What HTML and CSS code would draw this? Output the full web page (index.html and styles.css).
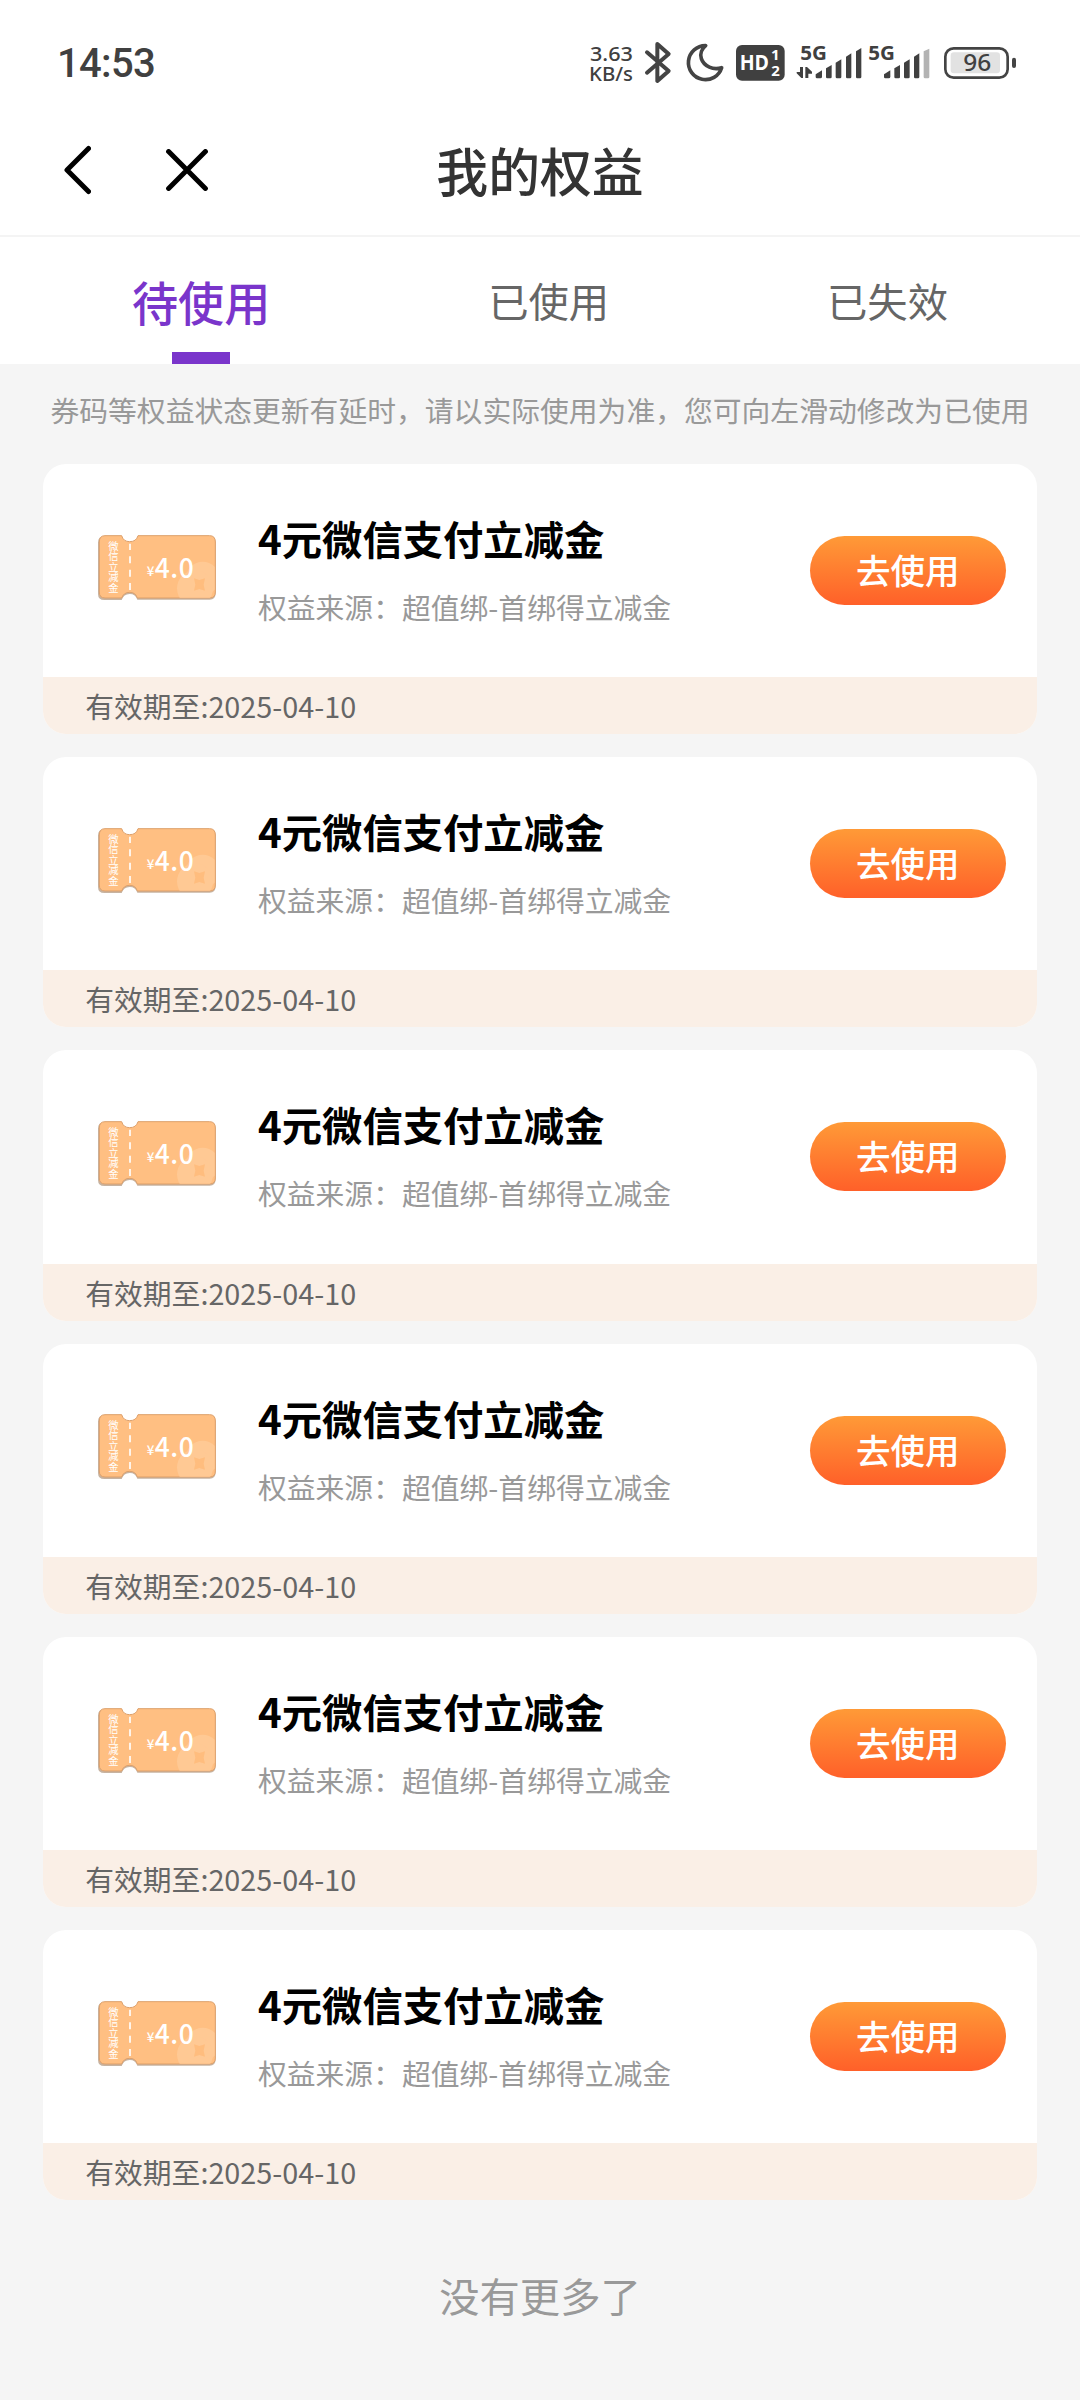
FILE: index.html
```
<!DOCTYPE html>
<html lang="zh-CN">
<head>
<meta charset="utf-8">
<title>我的权益</title>
<link rel="stylesheet" href="styles.css">
</head>
<body>
<svg class="defs" aria-hidden="true">
  <defs>
    <clipPath id="ticket-edge"><rect x="200" y="15" width="159" height="185" rx="16"/></clipPath>
    <symbol id="ticket" viewBox="0 0 375 220">
      <path d="M28 16H80Q84 37 104 37Q124 37 131 16H344Q362 16 362 35V187Q362 206 344 206H127Q122 189 104 189Q86 189 80 207H28Q9 207 9 189V35Q9 16 28 16Z" fill="#b9a08a" opacity=".8"/>
      <path d="M30 14H80Q85 32 104 32Q124 32 129 14H344Q361 14 361 33V183Q361 201 344 201H127Q122 184 104 184Q86 184 80 201H30Q13 201 13 183V33Q13 14 30 14Z" fill="#ffbf82" stroke="#dda06a" stroke-width="3"/>
      <g clip-path="url(#ticket-edge)" fill="#ffc994"><circle cx="323" cy="142" r="50"/><circle cx="300" cy="172" r="54"/></g>
      <path d="M297 142L313 147L330 142L326 161L330 179L313 174L297 179L301 161Z" fill="#ffbd7e"/>
      <path d="M105 38V184" stroke="#fff" stroke-width="5" stroke-dasharray="21 19" stroke-dashoffset="2"/>
    </symbol>
  </defs>
</svg>
<div class="status">
  <time class="clock">14:53</time>
  <svg class="indicators" viewBox="0 0 1440 270">
    <g class="speed">
      <text x="60" y="124" textLength="129" lengthAdjust="spacingAndGlyphs">3.63</text>
      <text x="57" y="184" textLength="132" lengthAdjust="spacingAndGlyphs">KB/s</text>
    </g>
    <path d="M231 97L296 153L262 183V72L296 102L231 158" fill="none" stroke="#444" stroke-width="12" stroke-linecap="round" stroke-linejoin="round"/>
    <path d="M407 77A51 51 0 1 0 455 143C430 151 402 140 394 116C389 101 396 86 407 77Z" fill="none" stroke="#444" stroke-width="11" stroke-linejoin="round"/>
    <rect x="498" y="75" width="146" height="107" rx="18" fill="#404040"/>
    <text class="hd" x="509" y="151" textLength="88" lengthAdjust="spacingAndGlyphs">HD</text>
    <text class="hd-sim" x="603" y="121">1</text>
    <text class="hd-sim" x="604" y="168">2</text>
    <text class="net" x="691" y="120" textLength="80" lengthAdjust="spacingAndGlyphs">5G</text>
    <text class="net" x="895" y="120" textLength="80" lengthAdjust="spacingAndGlyphs">5G</text>
    <g fill="#404040">
      <path d="M690 141H699V174H694L680 160V156H690ZM706 141H711L726 155V161H715V174H706Z"/>
      <path d="M737 163L756 151V170Q756 175 751 175H741Q737 175 737 171Z"/>
      <path d="M768 145L785 135V171Q785 175 781 175H772Q768 175 768 171Z"/>
      <path d="M797 128L814 118V171Q814 175 810 175H801Q797 175 797 171Z"/>
      <path d="M828 110L844 100V171Q844 175 840 175H832Q828 175 828 171Z"/>
      <path d="M858 94L874 84V171Q874 175 870 175H862Q858 175 858 171Z"/>
      <path d="M942 163L961 151V170Q961 175 956 175H946Q942 175 942 171Z"/>
      <path d="M973 145L990 135V171Q990 175 986 175H977Q973 175 973 171Z"/>
      <path d="M1002 128L1019 118V171Q1019 175 1015 175H1006Q1002 175 1002 171Z"/>
      <path d="M1032 110L1048 100V171Q1048 175 1044 175H1036Q1032 175 1032 171Z"/>
    </g>
    <path d="M1061 94L1078 86V171Q1078 175 1074 175H1065Q1061 175 1061 171Z" fill="#b3b3b3"/>
    <rect x="1126" y="85" width="187" height="88" rx="25" fill="none" stroke="#444" stroke-width="8"/>
    <rect x="1142" y="97" width="148" height="63" rx="10" fill="#e2e2e2"/>
    <rect x="1326" y="113" width="12" height="31" rx="6" fill="#444"/>
    <text class="battery" x="1180" y="153" textLength="84" lengthAdjust="spacingAndGlyphs">96</text>
  </svg>
</div>
<header class="nav">
  <svg class="nav-icon" viewBox="0 0 28 50"><path d="M25.5 3.5L4 25L25.5 46.5"/></svg>
  <svg class="nav-icon" viewBox="0 0 42 42"><path d="M2.6 2.6L39.4 39.4M39.4 2.6L2.6 39.4"/></svg>
  <h1 class="nav-title">我的权益</h1>
</header>
<nav class="tabs">
  <div class="tab tab-active">待使用</div>
  <div class="tab">已使用</div>
  <div class="tab">已失效</div>
</nav>
<p class="notice">券码等权益状态更新有延时，请以实际使用为准，您可向左滑动修改为已使用</p>
<main class="list">
  <article class="card">
    <div class="card-body">
      <svg class="coupon" viewBox="0 0 375 220"><use href="#ticket"/><text class="stub"><tspan x="40" y="56">微</tspan><tspan x="40" y="87">信</tspan><tspan x="40" y="119">立</tspan><tspan x="40" y="151">减</tspan><tspan x="40" y="182">金</tspan></text><text class="yen" x="155" y="136">¥</text><text class="amount" x="179" y="140">4.0</text></svg>
      <div class="info"><h2 class="name">4元微信支付立减金</h2><p class="source">权益来源：超值绑-首绑得立减金</p></div>
      <button class="use">去使用</button>
    </div>
    <div class="expiry">有效期至:2025-04-10</div>
  </article>
  <article class="card">
    <div class="card-body">
      <svg class="coupon" viewBox="0 0 375 220"><use href="#ticket"/><text class="stub"><tspan x="40" y="56">微</tspan><tspan x="40" y="87">信</tspan><tspan x="40" y="119">立</tspan><tspan x="40" y="151">减</tspan><tspan x="40" y="182">金</tspan></text><text class="yen" x="155" y="136">¥</text><text class="amount" x="179" y="140">4.0</text></svg>
      <div class="info"><h2 class="name">4元微信支付立减金</h2><p class="source">权益来源：超值绑-首绑得立减金</p></div>
      <button class="use">去使用</button>
    </div>
    <div class="expiry">有效期至:2025-04-10</div>
  </article>
  <article class="card">
    <div class="card-body">
      <svg class="coupon" viewBox="0 0 375 220"><use href="#ticket"/><text class="stub"><tspan x="40" y="56">微</tspan><tspan x="40" y="87">信</tspan><tspan x="40" y="119">立</tspan><tspan x="40" y="151">减</tspan><tspan x="40" y="182">金</tspan></text><text class="yen" x="155" y="136">¥</text><text class="amount" x="179" y="140">4.0</text></svg>
      <div class="info"><h2 class="name">4元微信支付立减金</h2><p class="source">权益来源：超值绑-首绑得立减金</p></div>
      <button class="use">去使用</button>
    </div>
    <div class="expiry">有效期至:2025-04-10</div>
  </article>
  <article class="card">
    <div class="card-body">
      <svg class="coupon" viewBox="0 0 375 220"><use href="#ticket"/><text class="stub"><tspan x="40" y="56">微</tspan><tspan x="40" y="87">信</tspan><tspan x="40" y="119">立</tspan><tspan x="40" y="151">减</tspan><tspan x="40" y="182">金</tspan></text><text class="yen" x="155" y="136">¥</text><text class="amount" x="179" y="140">4.0</text></svg>
      <div class="info"><h2 class="name">4元微信支付立减金</h2><p class="source">权益来源：超值绑-首绑得立减金</p></div>
      <button class="use">去使用</button>
    </div>
    <div class="expiry">有效期至:2025-04-10</div>
  </article>
  <article class="card">
    <div class="card-body">
      <svg class="coupon" viewBox="0 0 375 220"><use href="#ticket"/><text class="stub"><tspan x="40" y="56">微</tspan><tspan x="40" y="87">信</tspan><tspan x="40" y="119">立</tspan><tspan x="40" y="151">减</tspan><tspan x="40" y="182">金</tspan></text><text class="yen" x="155" y="136">¥</text><text class="amount" x="179" y="140">4.0</text></svg>
      <div class="info"><h2 class="name">4元微信支付立减金</h2><p class="source">权益来源：超值绑-首绑得立减金</p></div>
      <button class="use">去使用</button>
    </div>
    <div class="expiry">有效期至:2025-04-10</div>
  </article>
  <article class="card">
    <div class="card-body">
      <svg class="coupon" viewBox="0 0 375 220"><use href="#ticket"/><text class="stub"><tspan x="40" y="56">微</tspan><tspan x="40" y="87">信</tspan><tspan x="40" y="119">立</tspan><tspan x="40" y="151">减</tspan><tspan x="40" y="182">金</tspan></text><text class="yen" x="155" y="136">¥</text><text class="amount" x="179" y="140">4.0</text></svg>
      <div class="info"><h2 class="name">4元微信支付立减金</h2><p class="source">权益来源：超值绑-首绑得立减金</p></div>
      <button class="use">去使用</button>
    </div>
    <div class="expiry">有效期至:2025-04-10</div>
  </article>
</main>
<footer class="end">没有更多了</footer>
</body>
</html>
```
FILE: styles.css
```
* { box-sizing: border-box; }
body {
  margin: 0;
  min-height: 2400px;
  background: #f5f5f5;
  color: #333;
  font-family: "Noto Sans CJK SC", sans-serif;
}
h1, h2, p { margin: 0; }
.defs { position: absolute; width: 0; height: 0; }

.status {
  display: flex;
  justify-content: space-between;
  height: 110px;
  padding: 20px 30px 0 57px;
  background: #fff;
}
.clock {
  font: 500 40px/46px Roboto, sans-serif;
  letter-spacing: -0.7px;
  color: #404040;
  padding-top: 21px;
}
.indicators { width: 480px; height: 90px; }
.indicators text { fill: #404040; font-family: "Noto Sans", sans-serif; }
.indicators .speed text { font-size: 61px; font-weight: 500; }
.indicators .hd { fill: #fff; font-size: 63px; font-weight: 700; font-family: "Open Sans", sans-serif; }
.indicators .hd-sim { fill: #fff; font-size: 45px; font-weight: 700; }
.indicators .net { font-size: 58px; font-weight: 700; }
.indicators .battery { font-size: 70px; font-weight: 500; }

.nav {
  position: relative;
  display: flex;
  align-items: center;
  gap: 75px;
  height: 127px;
  padding: 0 63px 6px;
  background: #fff;
  border-bottom: 2px solid #f4f4f4;
}
.nav-icon {
  height: 50px;
  width: 28px;
  fill: none;
  stroke: #000;
  stroke-width: 5;
  stroke-linecap: round;
  stroke-linejoin: round;
}
.nav-icon + .nav-icon { width: 42px; height: 42px; }
.nav-title {
  position: absolute;
  left: 0;
  right: 0;
  text-align: center;
  font-size: 51.84px;
  line-height: 76px;
  font-weight: 500;
  pointer-events: none;
}

.tabs {
  display: flex;
  justify-content: space-between;
  height: 127px;
  padding: 0 132px;
  background: #fff;
}
.tab {
  font-size: 40.32px;
  line-height: 126px;
  color: #666;
}
.tab-active {
  display: flex;
  flex-direction: column;
  align-items: center;
  padding-top: 13px;
  font-size: 46.08px;
  line-height: 102px;
  font-weight: 500;
  color: #7a35cb;
}
.tab-active::after {
  content: "";
  width: 58px;
  height: 12px;
  background: #7a35cb;
}

.notice {
  height: 99.9px;
  font-size: 28.8px;
  line-height: 92px;
  text-align: center;
  white-space: nowrap;
  color: #999;
}

.list {
  display: flex;
  flex-direction: column;
  gap: 23.04px;
  padding: 0 43.2px;
}
.card {
  height: 270.2px;
  border-radius: 23px;
  background: #fff;
  overflow: hidden;
}
.card-body {
  display: flex;
  align-items: center;
  height: 213.2px;
  padding: 0 31px 0 51.4px;
}
.coupon { width: 125px; height: 73.33px; margin-bottom: 6px; }
.coupon text { fill: #fff; font-family: "Noto Sans CJK SC", sans-serif; }
.coupon .stub { font-size: 31px; }
.coupon .yen { font-size: 40px; font-weight: 500; }
.coupon .amount { font-size: 79px; font-weight: 500; letter-spacing: 2px; }
.info { flex: 1; margin-left: 38.4px; padding-top: 5px; }
.name {
  font-size: 40.32px;
  line-height: 68px;
  font-weight: 700;
  color: #000;
}
.source {
  font-size: 28.8px;
  line-height: 70px;
  color: #999;
}
.use {
  width: 196px;
  height: 69px;
  border: 0;
  padding: 0 0 3px;
  border-radius: 35px;
  background: linear-gradient(#ff9a37, #ff6029);
  color: #fff;
  font: 500 34.56px/66px "Noto Sans CJK SC", sans-serif;
}
.expiry {
  height: 57px;
  padding-left: 42px;
  background: #faefe6;
  font-size: 28.8px;
  line-height: 58px;
  color: #666;
}
.end {
  padding-top: 65px;
  text-align: center;
  font-size: 40.32px;
  line-height: 60px;
  color: #999;
}
```
